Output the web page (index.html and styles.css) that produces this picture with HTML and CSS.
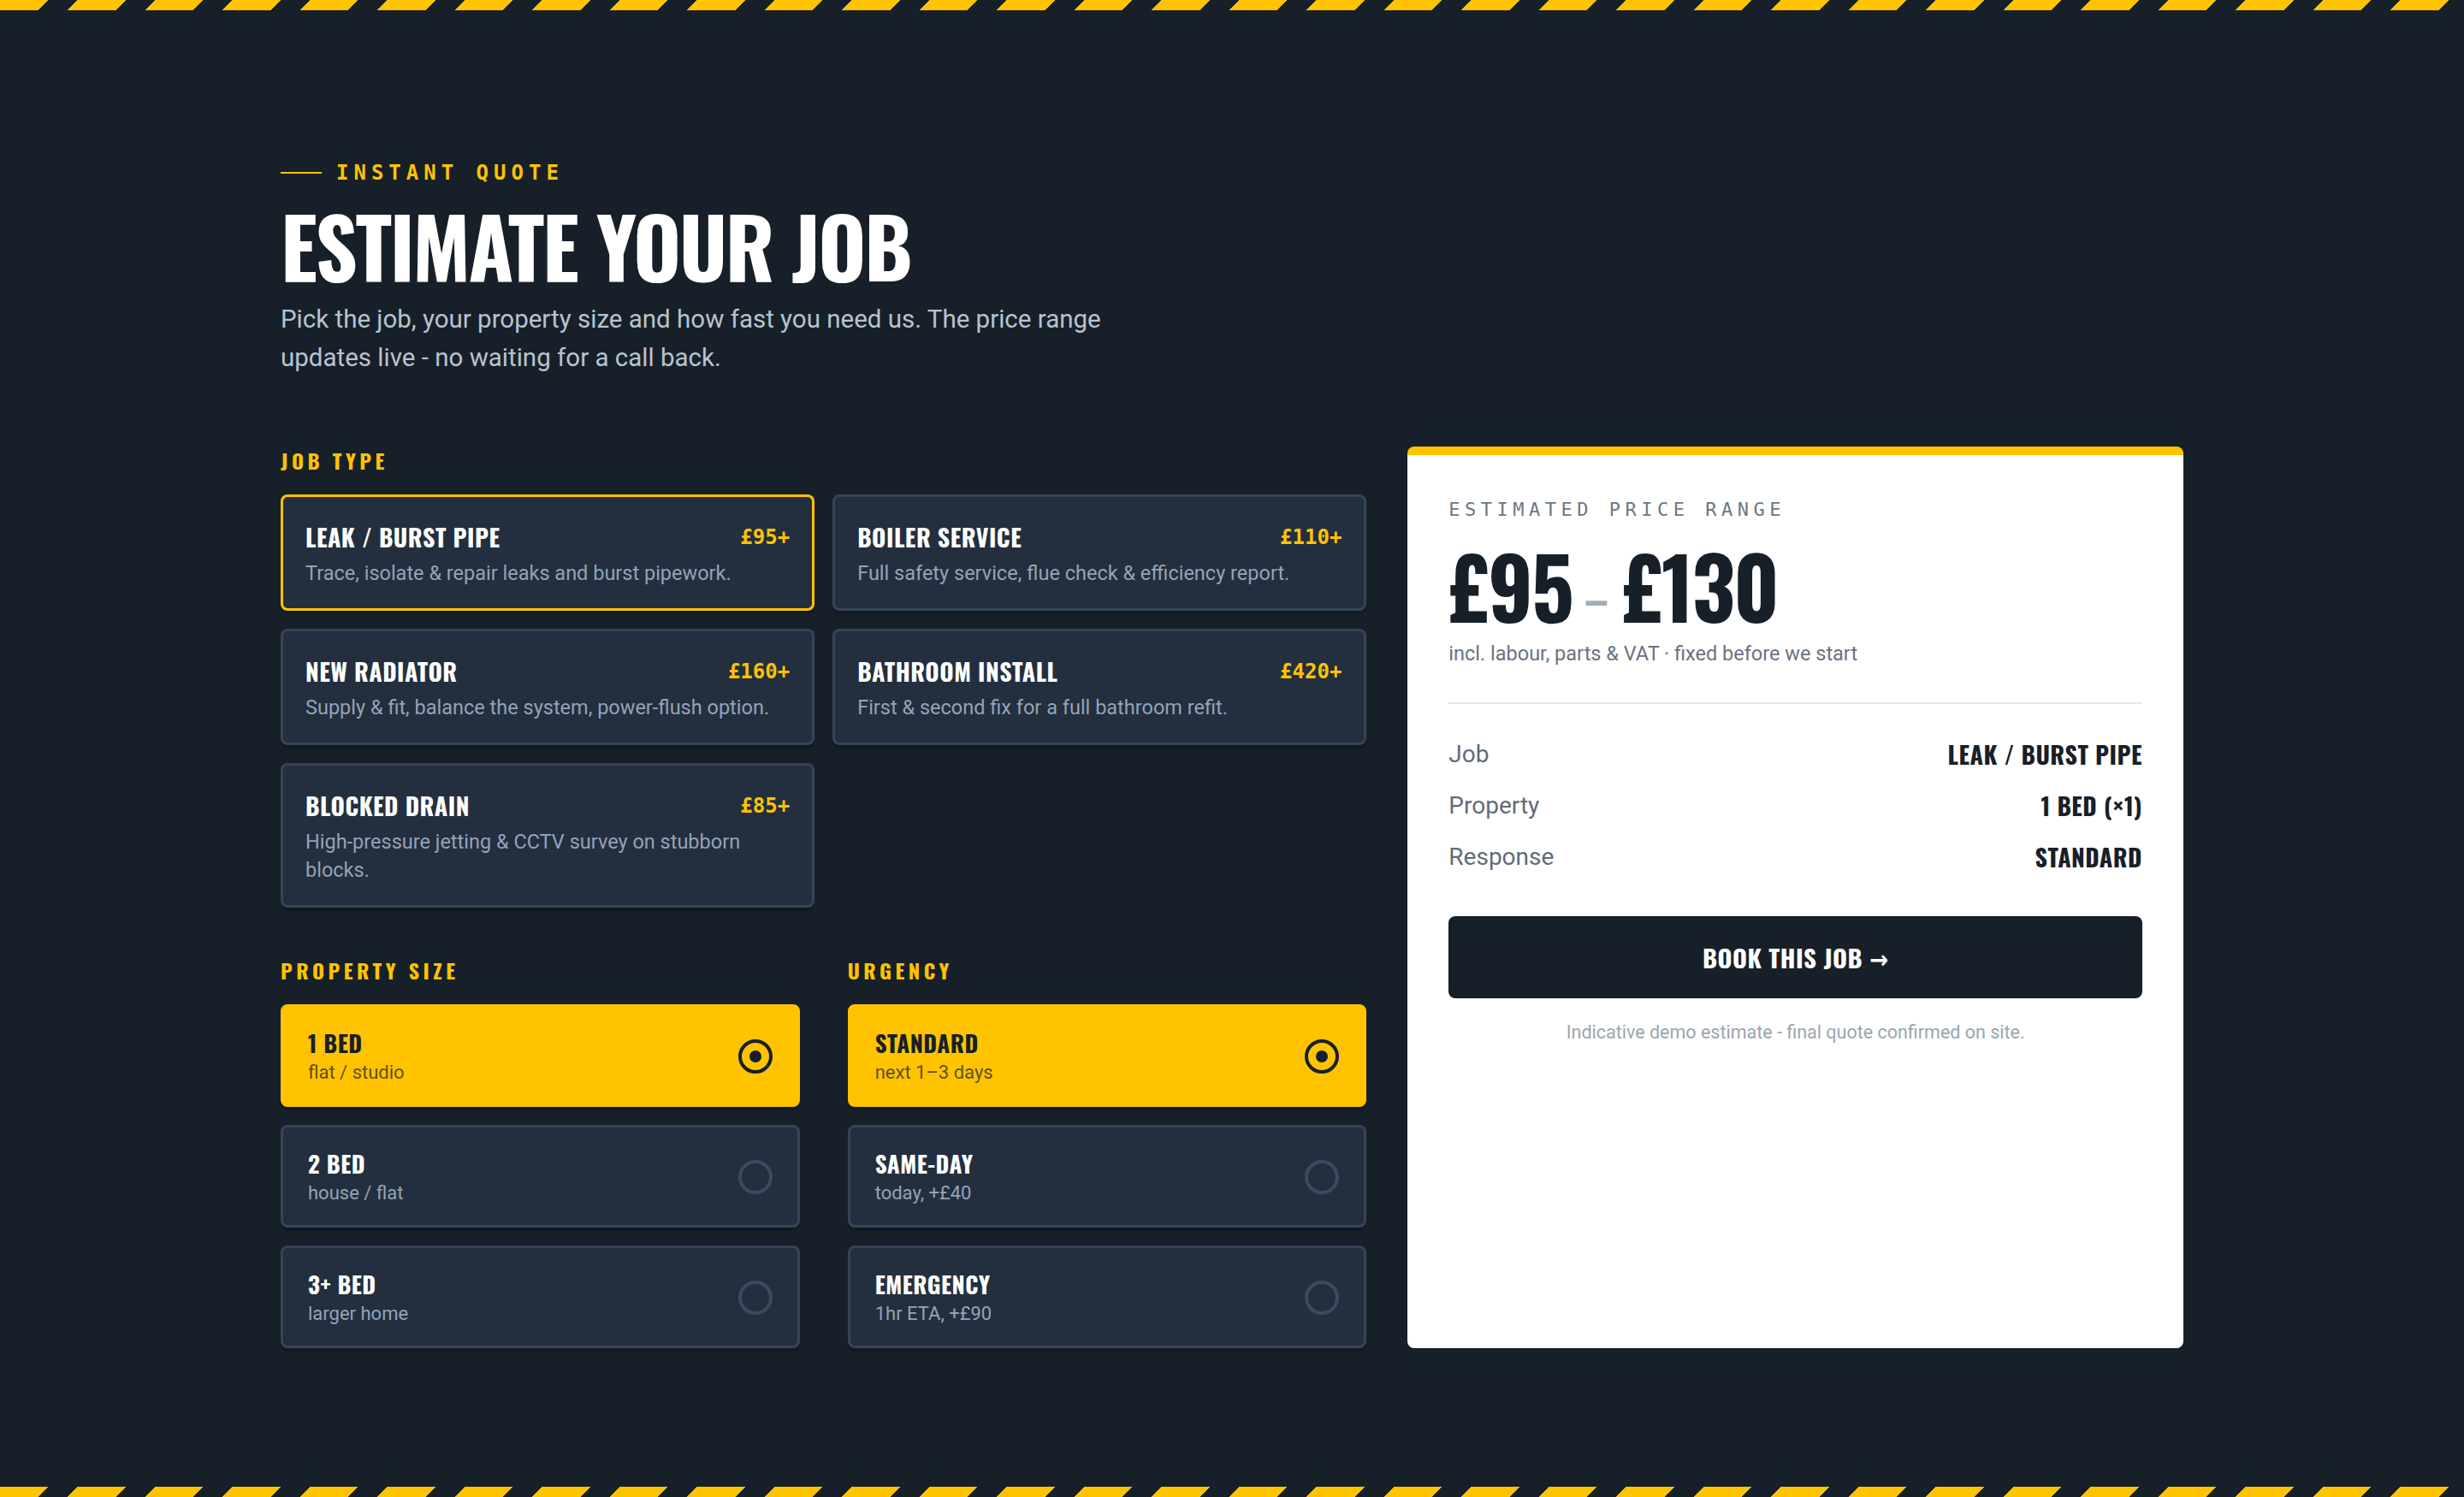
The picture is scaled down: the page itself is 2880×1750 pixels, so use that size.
FILE: index.html
```html
<!DOCTYPE html>
<html lang="en">
<head>
<meta charset="utf-8">
<title>Instant Quote – Estimate Your Job</title>
<link rel="stylesheet" href="styles.css">
</head>
<body>
<section class="quote">
  <div class="hazard"></div>
  <div class="wrap">
    <header class="intro">
      <p class="eyebrow"><span class="eyebrow-line"></span>INSTANT QUOTE</p>
      <h1 class="title">ESTIMATE YOUR JOB</h1>
      <p class="lede">Pick the job, your property size and how fast you need us. The price range updates live - no waiting for a call back.</p>
    </header>

    <div class="layout">
      <div class="form">
        <div class="group">
          <h2 class="group-label">JOB TYPE</h2>
          <div class="jobs">
            <div class="job is-selected">
              <div class="job-head"><span class="job-name">LEAK / BURST PIPE</span><span class="job-price">£95+</span></div>
              <p class="job-desc">Trace, isolate &amp; repair leaks and burst pipework.</p>
            </div>
            <div class="job">
              <div class="job-head"><span class="job-name">BOILER SERVICE</span><span class="job-price">£110+</span></div>
              <p class="job-desc">Full safety service, flue check &amp; efficiency report.</p>
            </div>
            <div class="job">
              <div class="job-head"><span class="job-name">NEW RADIATOR</span><span class="job-price">£160+</span></div>
              <p class="job-desc">Supply &amp; fit, balance the system, power-flush option.</p>
            </div>
            <div class="job">
              <div class="job-head"><span class="job-name">BATHROOM INSTALL</span><span class="job-price">£420+</span></div>
              <p class="job-desc">First &amp; second fix for a full bathroom refit.</p>
            </div>
            <div class="job">
              <div class="job-head"><span class="job-name">BLOCKED DRAIN</span><span class="job-price">£85+</span></div>
              <p class="job-desc">High-pressure jetting &amp; CCTV survey on stubborn blocks.</p>
            </div>
          </div>
        </div>

        <div class="options">
          <div class="group">
            <h2 class="group-label">PROPERTY SIZE</h2>
            <div class="choices">
              <div class="choice is-selected">
                <div class="choice-text"><span class="choice-name">1 BED</span><span class="choice-sub">flat / studio</span></div>
                <span class="radio"></span>
              </div>
              <div class="choice">
                <div class="choice-text"><span class="choice-name">2 BED</span><span class="choice-sub">house / flat</span></div>
                <span class="radio"></span>
              </div>
              <div class="choice">
                <div class="choice-text"><span class="choice-name">3+ BED</span><span class="choice-sub">larger home</span></div>
                <span class="radio"></span>
              </div>
            </div>
          </div>
          <div class="group">
            <h2 class="group-label">URGENCY</h2>
            <div class="choices">
              <div class="choice is-selected">
                <div class="choice-text"><span class="choice-name">STANDARD</span><span class="choice-sub">next 1–3 days</span></div>
                <span class="radio"></span>
              </div>
              <div class="choice">
                <div class="choice-text"><span class="choice-name">SAME-DAY</span><span class="choice-sub">today, +£40</span></div>
                <span class="radio"></span>
              </div>
              <div class="choice">
                <div class="choice-text"><span class="choice-name">EMERGENCY</span><span class="choice-sub">1hr ETA, +£90</span></div>
                <span class="radio"></span>
              </div>
            </div>
          </div>
        </div>
      </div>

      <aside class="summary">
        <div class="summary-head">
          <p class="summary-label">ESTIMATED PRICE RANGE</p>
          <p class="price"><span>£95</span><span class="dash">–</span><span>£130</span></p>
          <p class="price-note">incl. labour, parts &amp; VAT · fixed before we start</p>
        </div>
        <dl class="lines">
          <div class="line"><dt>Job</dt><dd>LEAK / BURST PIPE</dd></div>
          <div class="line"><dt>Property</dt><dd>1 BED (×1)</dd></div>
          <div class="line"><dt>Response</dt><dd>STANDARD</dd></div>
        </dl>
        <button class="book" type="button">BOOK THIS JOB →</button>
        <p class="disclaimer">Indicative demo estimate - final quote confirmed on site.</p>
      </aside>
    </div>
  </div>
  <div class="hazard"></div>
</section>
</body>
</html>
```

FILE: styles.css
```css
html,
body {
  margin: 0;
  padding: 0;
  background: #172029;
}

body {
  font-family: Roboto, "Liberation Sans", Arial, sans-serif;
  color: #ffffff;
}

.quote {
  min-height: 100vh;
  display: flex;
  flex-direction: column;
}

.hazard {
  flex: none;
  height: 12px;
  background: repeating-linear-gradient(135deg, #ffc300 0 40px, #172029 40px 64px);
}

.wrap {
  flex: 1;
  width: 2224px;
  margin: 0 auto;
  padding-top: 174px;
}

/* ---------- intro ---------- */

.eyebrow {
  display: flex;
  align-items: center;
  gap: 17px;
  margin: 0;
  font-family: "DejaVu Sans Mono", "Liberation Mono", monospace;
  font-weight: 700;
  font-size: 24px;
  line-height: 32px;
  letter-spacing: 6px;
  color: #ffc300;
}

.eyebrow-line {
  width: 48px;
  height: 2px;
  background: #ffc300;
}

.title {
  margin: 21px 0 0;
  font-family: "Oswald", "Liberation Sans Narrow", "DejaVu Sans Condensed", sans-serif;
  font-weight: 700;
  font-size: 96px;
  line-height: 1;
  letter-spacing: -2.4px;
  color: #ffffff;
}

.lede {
  margin: 16px 0 0;
  max-width: 1000px;
  font-size: 29.5px;
  line-height: 45px;
  color: #b9c3d0;
}

/* ---------- layout ---------- */

.layout {
  display: grid;
  grid-template-columns: 1.4fr 1fr;
  gap: 48px;
  margin-top: 81px;
}

.group-label {
  margin: 0 0 24px;
  font-family: "Oswald", "Liberation Sans Narrow", "DejaVu Sans Condensed", sans-serif;
  font-weight: 700;
  font-size: 24px;
  line-height: 32px;
  letter-spacing: 4.5px;
  color: #ffc300;
}

/* ---------- job cards ---------- */

.jobs {
  display: grid;
  grid-template-columns: 1fr 1fr;
  gap: 21px;
  align-items: start;
}

.job {
  background: #232f3e;
  border: 3px solid #344459;
  border-radius: 8px;
  padding: 29px 26px 24px;
  box-shadow: 0 4px 0 rgba(0, 0, 0, 0.18);
}

.job.is-selected {
  border-color: #ffc300;
}

.job-head {
  display: flex;
  justify-content: space-between;
  align-items: center;
  margin-bottom: 8px;
}

.job-name {
  font-family: "Oswald", "Liberation Sans Narrow", "DejaVu Sans Condensed", sans-serif;
  font-weight: 700;
  font-size: 28px;
  line-height: 36px;
  letter-spacing: 0.5px;
  color: #ffffff;
}

.job-price {
  font-family: "DejaVu Sans Mono", "Liberation Mono", monospace;
  font-weight: 700;
  font-size: 24px;
  line-height: 36px;
  color: #ffc300;
}

.job-desc {
  margin: 0;
  font-size: 23.5px;
  line-height: 33px;
  color: #94a3b8;
}

/* ---------- options ---------- */

.options {
  display: grid;
  grid-template-columns: 1fr 1fr;
  gap: 56px;
  margin-top: 57px;
}

.choices {
  display: flex;
  flex-direction: column;
  gap: 21px;
}

.choice {
  display: flex;
  align-items: center;
  justify-content: space-between;
  background: #232f3e;
  border: 3px solid #344459;
  border-radius: 8px;
  padding: 24px 29px 22px;
  box-shadow: 0 4px 0 rgba(0, 0, 0, 0.18);
}

.choice.is-selected {
  background: #ffc300;
  border-color: #ffc300;
  color: #172029;
}

.choice-text {
  display: flex;
  flex-direction: column;
  gap: 2px;
}

.choice-name {
  font-family: "Oswald", "Liberation Sans Narrow", "DejaVu Sans Condensed", sans-serif;
  font-weight: 700;
  font-size: 27px;
  line-height: 36px;
  letter-spacing: 0.5px;
}

.choice-sub {
  font-size: 22px;
  line-height: 30px;
  color: #94a3b8;
}

.choice.is-selected .choice-sub {
  color: rgba(23, 32, 41, 0.72);
}

.radio {
  flex: none;
  box-sizing: border-box;
  width: 40px;
  height: 40px;
  border: 4px solid #3a4a5f;
  border-radius: 50%;
  display: flex;
  align-items: center;
  justify-content: center;
}

.choice.is-selected .radio {
  border-color: #172029;
}

.choice.is-selected .radio::after {
  content: "";
  width: 14px;
  height: 14px;
  border-radius: 50%;
  background: #172029;
}

/* ---------- summary panel ---------- */

.summary {
  background: #ffffff;
  border-top: 10px solid #ffc300;
  border-radius: 8px;
  padding: 50px 48px 48px;
  color: #172029;
}

.summary-head {
  padding-bottom: 42px;
  border-bottom: 2px solid #e3e7ec;
}

.summary-label {
  margin: 0;
  font-family: "DejaVu Sans Mono", "Liberation Mono", monospace;
  font-size: 22px;
  line-height: 28px;
  letter-spacing: 5.5px;
  color: #6b7785;
}

.price {
  margin: 25px 0 0;
  font-family: "Oswald", "Liberation Sans Narrow", "DejaVu Sans Condensed", sans-serif;
  font-weight: 700;
  font-size: 98px;
  line-height: 1;
  letter-spacing: -2px;
  color: #172029;
}

.dash {
  display: inline-block;
  margin: 0 16px 0 14px;
  font-size: 50px;
  letter-spacing: 0;
  vertical-align: 8px;
  color: #a3adb9;
}

.price-note {
  margin: 16px 0 0;
  font-size: 23.5px;
  line-height: 30px;
  color: #6b7280;
}

.lines {
  margin: 29px 0 0;
  padding: 0;
}

.line {
  display: flex;
  justify-content: space-between;
  align-items: center;
  padding: 12px 0;
}

.line dt {
  font-size: 28px;
  line-height: 36px;
  color: #5f6b7a;
}

.line dd {
  margin: 0;
  font-family: "Oswald", "Liberation Sans Narrow", "DejaVu Sans Condensed", sans-serif;
  font-weight: 700;
  font-size: 28px;
  line-height: 36px;
  letter-spacing: 0.5px;
  color: #172029;
}

.book {
  display: block;
  width: 100%;
  height: 96px;
  margin-top: 39px;
  border: 0;
  border-radius: 8px;
  background: #172029;
  color: #ffffff;
  font-family: "Oswald", "Liberation Sans Narrow", "DejaVu Sans Condensed", sans-serif;
  font-weight: 700;
  font-size: 29px;
  line-height: 36px;
  letter-spacing: 0.5px;
  cursor: pointer;
}

.disclaimer {
  margin: 25px 0 0;
  text-align: center;
  font-size: 21.5px;
  line-height: 30px;
  color: #9aa5b1;
}
```
